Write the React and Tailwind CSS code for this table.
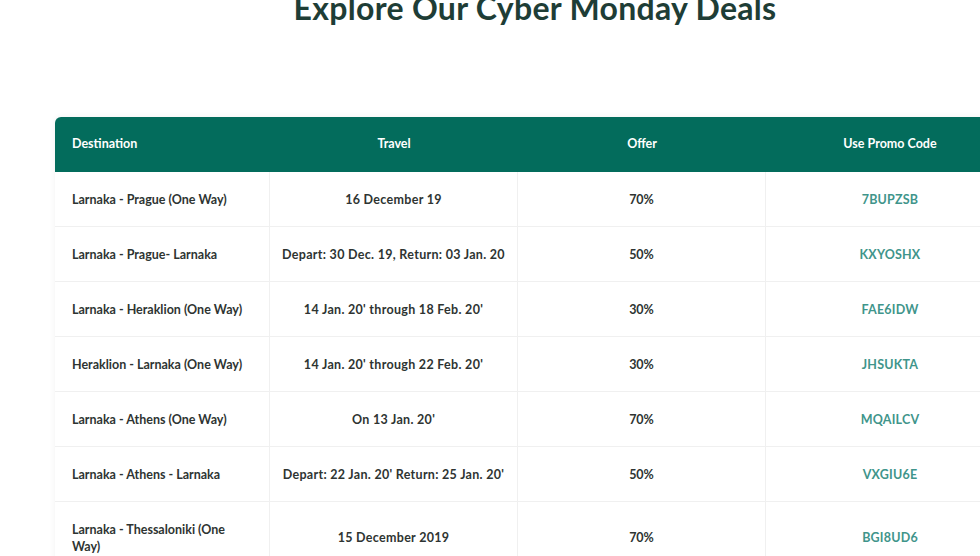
import React from 'react';

const deals = [
  { dest: 'Larnaka - Prague (One Way)', travel: '16 December 19', offer: '70%', code: '7BUPZSB' },
  { dest: 'Larnaka - Prague- Larnaka', travel: 'Depart: 30 Dec. 19, Return: 03 Jan. 20', offer: '50%', code: 'KXYOSHX' },
  { dest: 'Larnaka - Heraklion (One Way)', travel: '14 Jan. 20\' through 18 Feb. 20\'', offer: '30%', code: 'FAE6IDW' },
  { dest: 'Heraklion - Larnaka (One Way)', travel: '14 Jan. 20\' through 22 Feb. 20\'', offer: '30%', code: 'JHSUKTA' },
  { dest: 'Larnaka - Athens (One Way)', travel: 'On 13 Jan. 20\'', offer: '70%', code: 'MQAILCV' },
  { dest: 'Larnaka - Athens - Larnaka', travel: 'Depart: 22 Jan. 20\' Return: 25 Jan. 20\'', offer: '50%', code: 'VXGIU6E' },
  { dest: 'Larnaka - Thessaloniki (One Way)', travel: '15 December 2019', offer: '70%', code: 'BGI8UD6' },
];

const App = () => {
  return (
    <div className="min-h-screen bg-white overflow-hidden font-['Lato','Open_Sans',sans-serif]">
      {/* Heading */}
      <div className="flex justify-center mt-[-14px] pl-[90px]">
        <h1 className="text-[32px] leading-[44px] font-bold text-[#1e3d36] tracking-[0.3px]">
          Explore Our Cyber Monday Deals
        </h1>
      </div>

      {/* Deals table */}
      <div className="ml-[55px] mt-[87px] w-[959px] rounded-t-[6px] shadow-[0_0_6px_rgba(0,0,0,0.06)]">
        <div className="grid grid-cols-[215px_248px_248px_248px] h-[55px] bg-[#036c5c] rounded-t-[6px] text-white text-[12.5px] font-bold items-center">
          <div className="pl-[17px]">Destination</div>
          <div className="text-center">Travel</div>
          <div className="text-center">Offer</div>
          <div className="text-center">Use Promo Code</div>
        </div>
        {deals.map((d, i) => (
          <div
            key={i}
            className="grid grid-cols-[215px_248px_248px_248px] border-b border-[#f0f0f0] text-[12.5px] font-bold text-[#2e3432] leading-[17px]"
          >
            <div className="pl-[17px] pr-[24px] py-[18.5px] border-r border-[#f0f0f0] flex items-center">{d.dest}</div>
            <div className="py-[18.5px] border-r border-[#f0f0f0] flex items-center justify-center text-center tracking-[0.3px]">{d.travel}</div>
            <div className="py-[18.5px] border-r border-[#f0f0f0] flex items-center justify-center">{d.offer}</div>
            <div className="py-[18.5px] flex items-center justify-center text-[#3f958b] tracking-[0.2px]">{d.code}</div>
          </div>
        ))}
      </div>
    </div>
  );
};

export default App;
